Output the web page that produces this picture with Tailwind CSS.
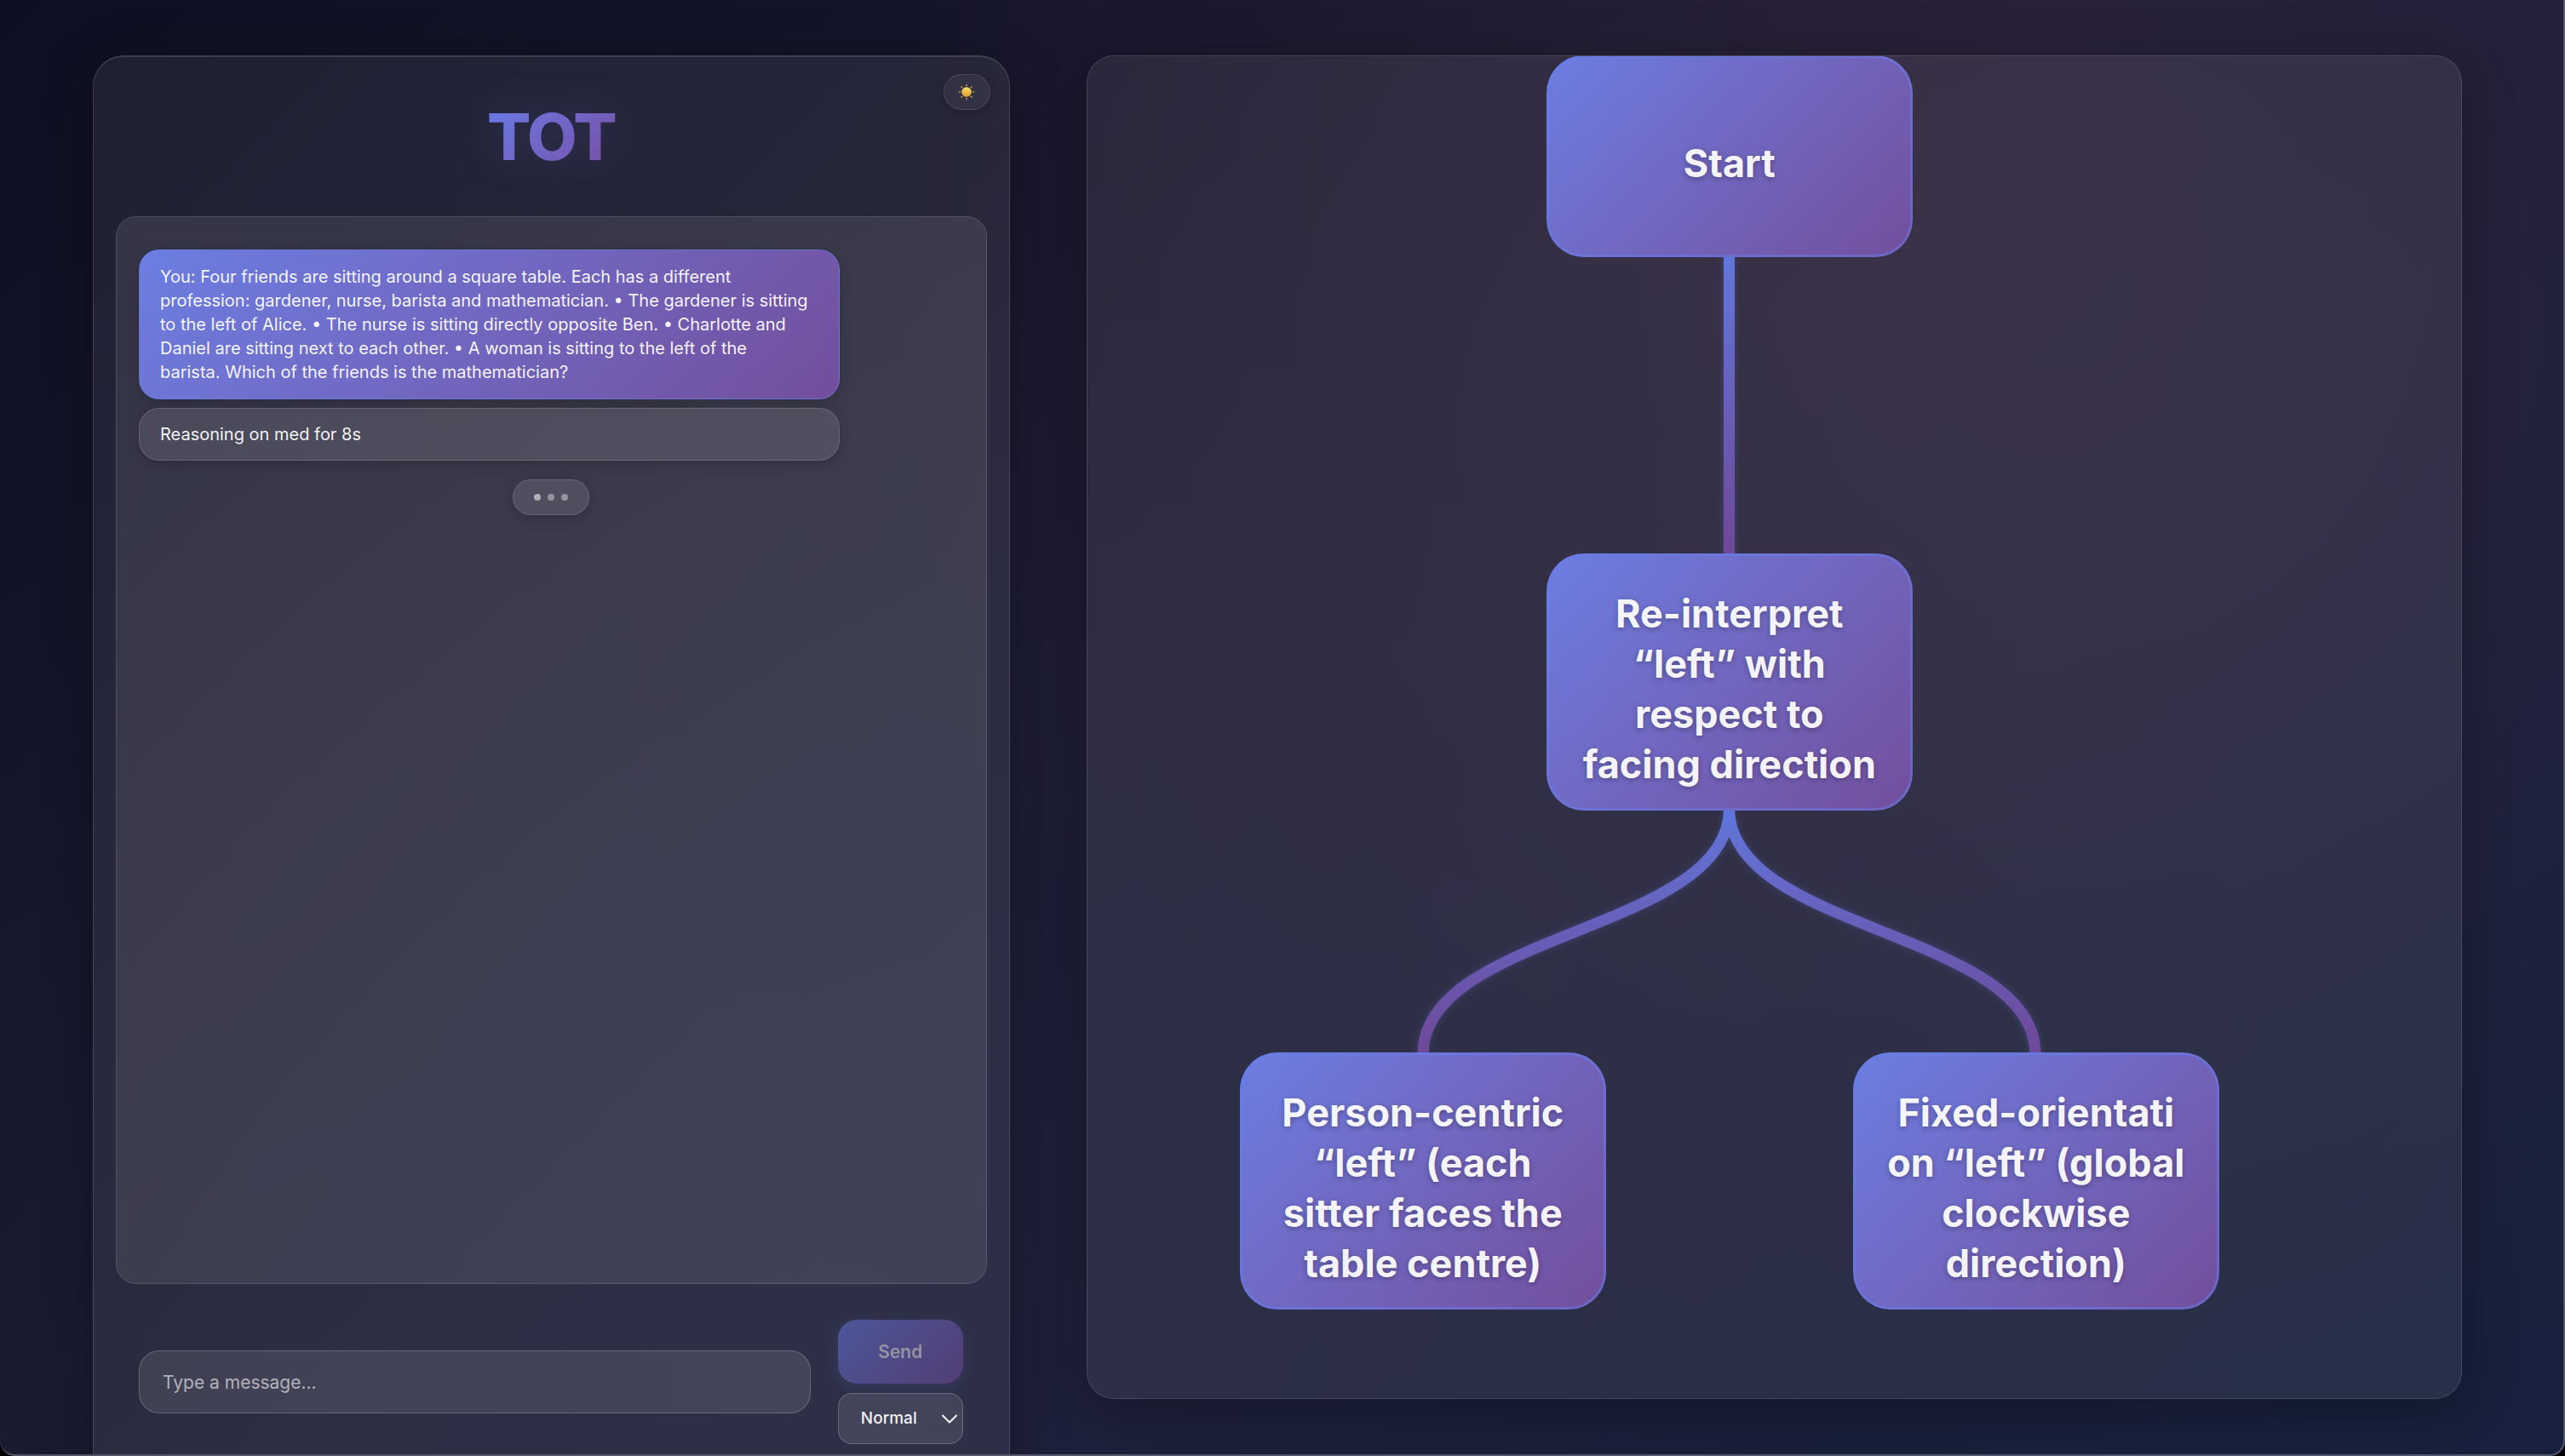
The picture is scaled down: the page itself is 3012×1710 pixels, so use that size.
<!DOCTYPE html>
<html lang="en" class="bg-black">
<head>
<meta charset="utf-8">
<meta name="viewport" content="width=device-width, initial-scale=1">
<title>TOT</title>
<script src="https://cdn.jsdelivr.net/npm/@tailwindcss/browser@4"></script>
</head>
<body class="bg-black font-['Inter',sans-serif] text-white/95 antialiased">
<main class="grid h-screen grid-cols-[2fr_3fr] items-start gap-[90px] overflow-hidden rounded-b-[18px] border-r-2 border-b-2 border-white/25 bg-[radial-gradient(circle_at_80%_20%,rgba(255,119,160,0.08),transparent_50%),radial-gradient(circle_at_30%_90%,rgba(120,119,198,0.05),transparent_50%),linear-gradient(135deg,#0f0f23_0%,#1b1b31_45%,#17213d_100%)] bg-origin-border pt-[65px] pr-[119px] pl-[109px]">

  <!-- Chat panel, runs past the bottom of the window -->
  <section class="relative flex h-[calc(100vh+50px)] flex-col rounded-[36px] border-x border-t-2 border-white/12 bg-white/7 px-[26px] shadow-[0_8px_64px_rgba(0,0,0,0.3)]">
    <button type="button" aria-label="Switch to light theme" class="absolute top-5 right-[22px] flex h-[42px] w-[55px] items-center justify-center rounded-[22px] border border-white/12 bg-white/5 shadow-[0_4px_16px_rgba(0,0,0,0.2)]">
      <svg class="size-5" viewBox="0 0 20 20" aria-hidden="true">
        <defs><linearGradient id="sun" x1="0" y1="0" x2="0" y2="1"><stop offset="0" stop-color="#f3e06a"/><stop offset="1" stop-color="#e09a32"/></linearGradient></defs>
        <circle cx="10" cy="10" r="5.8" fill="url(#sun)"/>
        <g fill="#d9a63c"><path id="ray" d="M9 3 10 0l1 3z"/><use href="#ray" transform="rotate(45 10 10)"/><use href="#ray" transform="rotate(90 10 10)"/><use href="#ray" transform="rotate(135 10 10)"/><use href="#ray" transform="rotate(180 10 10)"/><use href="#ray" transform="rotate(225 10 10)"/><use href="#ray" transform="rotate(270 10 10)"/><use href="#ray" transform="rotate(315 10 10)"/></g>
      </svg>
    </button>

    <header class="flex h-[187px] shrink-0 justify-center pt-[43px]">
      <h1 class="h-[100px] bg-linear-135 from-[#667eea] to-[#764ba2] bg-clip-text text-[76px] leading-[100px] font-extrabold tracking-tight text-transparent drop-shadow-[0_0_24px_rgba(102,126,234,0.2)]">TOT</h1>
    </header>

    <div class="flex h-[calc(100vh-456px)] shrink-0 flex-col rounded-[24px] border border-white/12 bg-white/9 px-[26px] pt-[38px]">
      <div class="w-[85%] rounded-[24px] border border-[#667eea]/60 bg-linear-135 from-[#6b7ee2] to-[#724e9d] px-6 py-[17px] text-[20px] leading-[28px] shadow-[0_4px_16px_rgba(0,0,0,0.2)]">You: Four friends are sitting around a square table. Each has a different profession: gardener, nurse, barista and mathematician. • The gardener is sitting to the left of Alice. • The nurse is sitting directly opposite Ben. • Charlotte and Daniel are sitting next to each other. • A woman is sitting to the left of the<br>barista. Which of the friends is the mathematician?</div>
      <div class="mt-[10px] w-[85%] rounded-[24px] border border-white/15 bg-white/10 px-6 py-4 text-[20px] leading-[28px] shadow-[0_4px_16px_rgba(0,0,0,0.2)]">Reasoning on med for 8s</div>
      <div role="status" aria-label="Assistant is thinking" class="mt-[22px] flex h-[42px] w-[90px] items-center justify-center gap-2 self-center rounded-[22px] border border-white/15 bg-white/10 shadow-[0_4px_16px_rgba(0,0,0,0.2)]">
        <span class="mb-px size-2 rounded-full bg-white/55"></span>
        <span class="size-2 rounded-full bg-white/40"></span>
        <span class="size-2 rounded-full bg-white/40"></span>
      </div>
    </div>

    <form class="flex items-center gap-8 pt-[42px] pr-7 pl-[27px]">
      <input type="text" aria-label="Message" placeholder="Type a message..." class="h-[74px] min-w-0 flex-1 rounded-[24px] border border-white/20 bg-white/10 px-[27px] text-[21px] placeholder:text-white/60">
      <div class="flex w-[147px] flex-col gap-[11px]">
        <button type="submit" disabled class="h-[75px] rounded-[22px] bg-linear-135 from-[#667eea] to-[#764ba2] text-[21px] font-semibold opacity-50 shadow-[0_4px_16px_rgba(102,126,234,0.3)]">Send</button>
        <div class="relative">
          <select aria-label="Reasoning effort" class="h-[60px] w-full appearance-none rounded-[16px] border border-white/20 bg-white/10 pl-[26px] text-[19px] font-medium"><option>Normal</option></select>
          <svg class="pointer-events-none absolute top-[25px] right-[7px] h-[11px] w-[18px]" viewBox="0 0 18 11" fill="none" stroke="#f5f5f8" stroke-width="2" stroke-linecap="round" stroke-linejoin="round" aria-hidden="true"><path d="m1 1.500 8 8 8-8"/></svg>
        </div>
      </div>
    </form>
  </section>

  <!-- Reasoning tree -->
  <section aria-label="Reasoning tree" class="relative h-[calc(100vh-132px)] overflow-hidden rounded-[32px] border border-white/12 bg-white/7 shadow-[0_8px_64px_rgba(0,0,0,0.3)]">
    <svg class="absolute inset-0 size-full" fill="none" stroke-width="13" aria-hidden="true">
      <defs>
        <linearGradient id="trunk" gradientUnits="userSpaceOnUse" x1="0" y1="236" x2="0" y2="586"><stop stop-color="#667eea"/><stop offset="1" stop-color="#764ba2"/></linearGradient>
        <linearGradient id="branch" gradientUnits="userSpaceOnUse" x1="0" y1="886" x2="0" y2="1172"><stop stop-color="#667eea"/><stop offset="1" stop-color="#764ba2"/></linearGradient>
      </defs>
      <g class="opacity-90 drop-shadow-[0_0_4px_rgba(102,126,234,0.3)]">
        <path stroke="url(#trunk)" d="M753.500 235V586"/>
        <path stroke="url(#branch)" d="M753.500 884C753.500 1028 394 1028 394 1172"/>
        <path stroke="url(#branch)" d="M753.500 884C753.500 1028 1113 1028 1113 1172"/>
      </g>
    </svg>
    <div class="absolute -top-px left-[539px] flex h-[237px] w-[430px] items-center justify-center rounded-[44px] border-[3px] border-[#667eea]/50 bg-linear-135 from-[#6b7ee2] to-[#724e9d] bg-origin-border pt-[15px] text-center text-[45px] leading-[59px] font-bold text-shadow-[0_2px_6px_rgba(0,0,0,0.3)]">Start</div>
    <div class="absolute top-[584px] left-[539px] flex h-[302px] w-[430px] items-center justify-center rounded-[44px] border-[3px] border-[#667eea]/50 bg-linear-135 from-[#6b7ee2] to-[#724e9d] bg-origin-border pt-[15px] text-center text-[45px] leading-[59px] font-bold text-shadow-[0_2px_6px_rgba(0,0,0,0.3)]">Re-interpret<br>“left” with<br>respect to<br>facing direction</div>
    <div class="absolute top-[1170px] left-[179px] flex h-[302px] w-[430px] items-center justify-center rounded-[44px] border-[3px] border-[#667eea]/50 bg-linear-135 from-[#6b7ee2] to-[#724e9d] bg-origin-border pt-[15px] text-center text-[45px] leading-[59px] font-bold text-shadow-[0_2px_6px_rgba(0,0,0,0.3)]">Person-centric<br>“left” (each<br>sitter faces the<br>table centre)</div>
    <div class="absolute top-[1170px] left-[899px] flex h-[302px] w-[430px] items-center justify-center rounded-[44px] border-[3px] border-[#667eea]/50 bg-linear-135 from-[#6b7ee2] to-[#724e9d] bg-origin-border pt-[15px] text-center text-[45px] leading-[59px] font-bold text-shadow-[0_2px_6px_rgba(0,0,0,0.3)]">Fixed-orientati<br>on “left” (global<br>clockwise<br>direction)</div>
  </section>
</main>
</body>
</html>
